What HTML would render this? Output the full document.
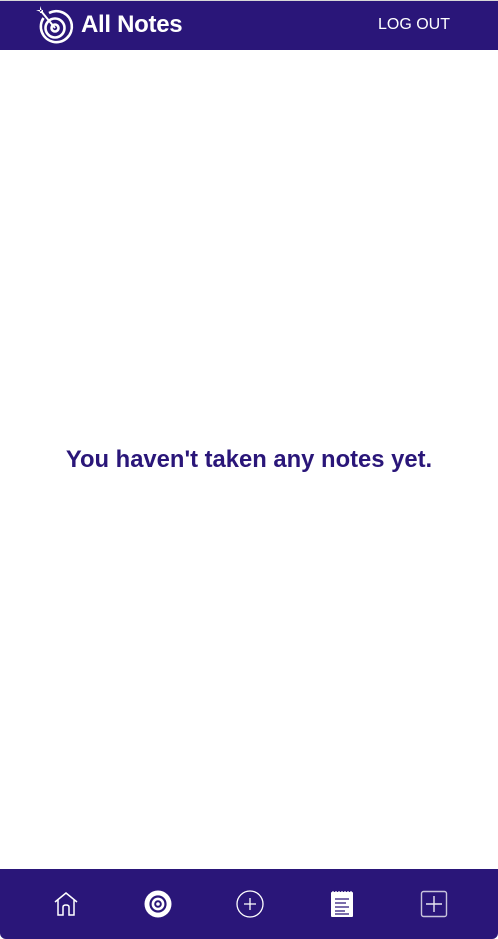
<!DOCTYPE html>
<html><head><style>
html,body{margin:0;padding:0;width:498px;height:939px;background:#fff;overflow:hidden;font-family:"Liberation Sans",Arial,sans-serif}
.hdr{position:absolute;left:0;top:1px;width:498px;height:49px;background:#2a1679}
.top{position:absolute;left:0;top:0;width:498px;height:1px;background:#d8d8d8}
.title{position:absolute;left:81px;top:11px;color:#fff;font-weight:bold;font-size:24px;letter-spacing:-0.3px}
.logout{position:absolute;left:378px;top:16px;color:#fff;font-size:16px}
.msg{position:absolute;left:0;width:498px;top:446px;text-align:center;color:#2a1679;font-weight:bold;font-size:23.8px;letter-spacing:0}
.ftr{position:absolute;left:0;top:869px;width:498px;height:70px;background:#2a1679;border-radius:0 0 6px 6px}
svg{position:absolute}
</style></head><body>
<div class="top"></div>
<div class="hdr"></div>
<svg style="left:35px;top:5px" width="40" height="42" viewBox="0 0 40 42">
<g fill="none" stroke="#fff" stroke-width="2.6">
<path d="M8.5 13 A15.5 15.5 0 1 0 14 8"/>
<circle cx="20" cy="23" r="9.5"/>
<circle cx="20" cy="23" r="3.5"/>
</g>
<path d="M20 23 L6 6" stroke="#fff" stroke-width="2"/>
<path d="M1 5 L8 5 L8 8 Z M5 1 L5 8 L8 8 Z" fill="#fff"/>
</svg>
<div class="title">All Notes</div>
<div class="logout">LOG OUT</div>
<div class="msg">You haven't taken any notes yet.</div>
<div class="ftr"></div>
<svg style="left:53px;top:891px" width="26" height="26" viewBox="0 0 26 26">
<path d="M2 11 L13 2 L24 11 M5 9 V24 H10 V16 Q10 14 13 14 Q16 14 16 16 V24 H21 V9" fill="none" stroke="#fff" stroke-width="1.5"/>
</svg>
<svg style="left:144px;top:890px" width="28" height="28" viewBox="0 0 28 28">
<circle cx="14" cy="14" r="13.5" fill="#fff"/>
<circle cx="14" cy="14" r="7.5" fill="none" stroke="#2a1679" stroke-width="2.2"/>
<circle cx="14" cy="14" r="2.8" fill="none" stroke="#2a1679" stroke-width="2"/>
</svg>
<svg style="left:236px;top:890px" width="28" height="28" viewBox="0 0 28 28">
<circle cx="14" cy="14" r="13" fill="none" stroke="#fff" stroke-width="1.3"/>
<path d="M14 8 V20 M8 14 H20" stroke="#fff" stroke-width="1.3"/>
</svg>
<svg style="left:330px;top:890px" width="24" height="28" viewBox="0 0 24 28">
<rect x="1" y="2" width="22" height="25" rx="1" fill="#fff"/>
<path d="M3 1 V3 M6 1 V3 M9 1 V3 M12 1 V3 M15 1 V3 M18 1 V3 M21 1 V3" stroke="#fff" stroke-width="1.2"/>
<path d="M5 9 H19 M5 13 H16 M5 17 H19 M5 21 H15 M5 24 H19" stroke="#2a1679" stroke-width="1.3"/>
</svg>
<svg style="left:420px;top:890px" width="28" height="28" viewBox="0 0 28 28">
<rect x="1.5" y="1.5" width="25" height="25" rx="2" fill="none" stroke="#c8c4dc" stroke-width="1.4"/>
<path d="M14 6 V22 M6 14 H22" stroke="#e8e6f2" stroke-width="1.4"/>
</svg>
</body></html>
